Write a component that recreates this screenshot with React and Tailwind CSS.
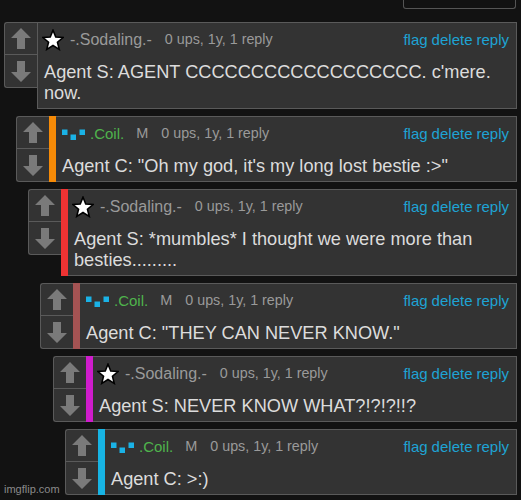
import React from "react";

const comments = [
  { level: 0, user: "s", bar: null, text: "Agent S: AGENT CCCCCCCCCCCCCCCCCC. c'mere. now." },
  { level: 1, user: "c", bar: "bg-[#f58a07]", text: "Agent C: \"Oh my god, it's my long lost bestie :>\"" },
  { level: 2, user: "s", bar: "bg-[#ee3333]", text: "Agent S: *mumbles* I thought we were more than besties........." },
  { level: 3, user: "c", bar: "bg-[#a45353]", text: "Agent C: \"THEY CAN NEVER KNOW.\"" },
  { level: 4, user: "s", bar: "bg-[#cf1ccc]", text: "Agent S: NEVER KNOW WHAT?!?!?!!?" },
  { level: 5, user: "c", bar: "bg-[#17b4e4]", text: "Agent C: >:)" },
];

const indents = ["ml-[4px]", "ml-[16px]", "ml-[28px]", "ml-[40px]", "ml-[53px]", "ml-[65px]"];

function Arrow({ down }) {
  return (
    <svg width="20" height="21" viewBox="0 0 20 21" className={down ? "rotate-180" : ""}>
      <polygon points="10,0 20,10 14,10 14,21 6,21 6,10 0,10" fill="#7a7a7a" />
    </svg>
  );
}

function Star() {
  const pts = [];
  for (let i = 0; i < 10; i++) {
    const r = i % 2 === 0 ? 10.6 : 4.7;
    const a = -Math.PI / 2 + (i * Math.PI) / 5;
    pts.push(`${(11 + r * Math.cos(a)).toFixed(2)},${(11.8 + r * Math.sin(a)).toFixed(2)}`);
  }
  return (
    <svg width="22" height="22" viewBox="0 0 22 22" className="-ml-[2px] h-[22px] w-[22px] shrink-0">
      <polygon points={pts.join(" ")} fill="#ffffff" stroke="#000" strokeWidth="1.6" strokeLinejoin="miter" />
    </svg>
  );
}

function CoilIcon() {
  return (
    <svg width="24" height="11" viewBox="0 0 24 11" className="h-[11px] w-[24px] shrink-0">
      <rect x="0" y="0.5" width="5.5" height="5.5" fill="#1ab2e6" />
      <rect x="8.5" y="5.5" width="5.5" height="5.5" fill="#1ab2e6" />
      <rect x="17.5" y="0.5" width="5.5" height="5.5" fill="#1ab2e6" />
    </svg>
  );
}

function Comment({ c }) {
  return (
    <div className={`flex items-start ${indents[c.level]}`}>
      <div className="flex w-[33px] shrink-0 flex-col rounded-l-[3px] border border-r-0 border-[#5a5a5a] bg-[#333333]">
        <div className="flex h-[32px] items-center justify-center border-b border-[#5a5a5a]">
          <Arrow />
        </div>
        <div className="flex h-[32px] items-center justify-center">
          <Arrow down />
        </div>
      </div>
      {c.bar && <div className={`w-[7px] self-stretch ${c.bar}`} />}
      <div
        className={`flex-1 border-y border-r border-[#5a5a5a] bg-[#333333] pt-[7px] pb-[4px] pr-[7px] ${
          c.bar ? "pl-[6px]" : "border-l pl-[6px]"
        }`}
      >
        <div className="flex h-5 items-center whitespace-nowrap">
          {c.user === "s" ? (
            <>
              <Star />
              <span className="ml-[6px] text-[16px] text-[#9a9a9a]">-.Sodaling.-</span>
            </>
          ) : (
            <>
              <CoilIcon />
              <span className="ml-[4px] text-[15px] text-[#4fb34c]">.Coil.</span>
              <span className="ml-[12px] text-[14.5px] text-[#9a9a9a]">M</span>
            </>
          )}
          <span className="ml-[13px] text-[14.3px] text-[#9a9a9a]">0 ups, 1y, 1 reply</span>
          <div className="ml-auto flex gap-[4px] text-[15px] text-[#1ea3d4]">
            <span>flag</span>
            <span>delete</span>
            <span>reply</span>
          </div>
        </div>
        <div className="mt-[12px] text-[18.2px] leading-[21px] text-[#dcdcdc]">{c.text}</div>
      </div>
    </div>
  );
}

export default function App() {
  return (
    <div
      className="relative h-[500px] w-[521px] overflow-hidden bg-[#121212]"
      style={{ fontFamily: '"Liberation Sans", Arial, sans-serif' }}
    >
      <div className="flex justify-end pr-[5px]">
        <div className="h-[9px] w-[113px] rounded-b-[3px] border-x border-b border-[#555555]" />
      </div>
      <div className="mt-[13px] flex flex-col gap-[7px] pr-[4px]">
        {comments.map((c, i) => (
          <Comment key={i} c={c} />
        ))}
      </div>
      <div className="absolute bottom-[3px] left-[4px] text-[11px] text-[#8a8a8a]">imgflip.com</div>
    </div>
  );
}
